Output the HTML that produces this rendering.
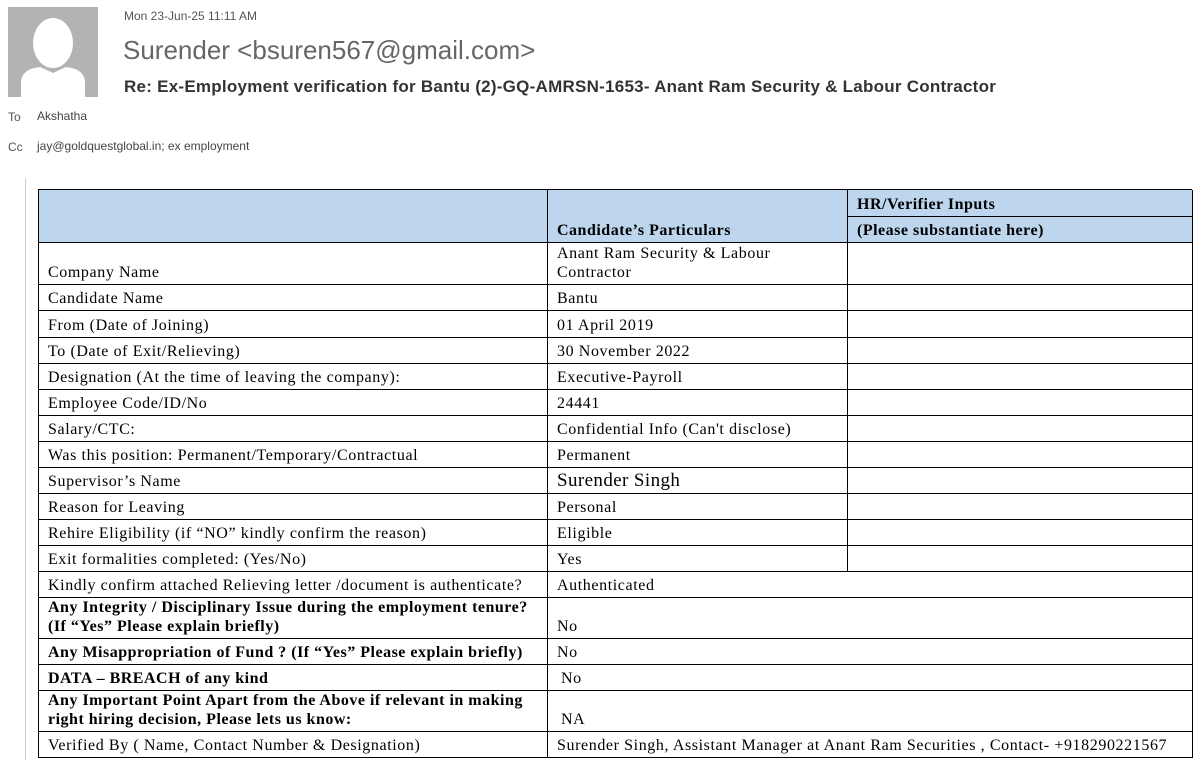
<!DOCTYPE html>
<html><head><meta charset="utf-8"><style>
body{margin:0;width:1202px;height:760px;background:#fff;position:relative;overflow:hidden;font-family:"Liberation Sans",sans-serif}
.a{position:absolute;white-space:nowrap}
.c{position:absolute;box-sizing:border-box;border-right:1px solid #000;border-bottom:1px solid #000;font-family:"Liberation Serif",serif;font-size:16px;letter-spacing:0.6px;color:#000;display:flex;align-items:flex-end;padding:0 9px 2px;line-height:19px;white-space:nowrap}
.h{background:#bdd6ee;font-weight:bold;letter-spacing:0.5px}
.b{font-weight:bold;letter-spacing:0.5px}
</style></head><body>
<div class="a" style="left:8px;top:7px;width:90px;height:90px;background:#b3b3b3;overflow:hidden">
<svg width="90" height="90" viewBox="0 0 90 90"><ellipse cx="45" cy="36" rx="20" ry="25" fill="#fff"/><path d="M13 90 L13 76 Q13 62 32 60 L45 66 L58 60 Q77 62 77 76 L77 90Z" fill="#fff"/></svg></div>
<div class="a" style="left:124px;top:9px;font-size:12px;color:#555">Mon 23-Jun-25 11:11 AM</div>
<div class="a" style="left:123px;top:35px;font-size:26px;color:#666">Surender &lt;bsuren567@gmail.com&gt;</div>
<div class="a" style="left:124px;top:77px;font-size:17px;font-weight:bold;color:#333;letter-spacing:0.25px">Re: Ex-Employment verification for Bantu (2)-GQ-AMRSN-1653- Anant Ram Security &amp; Labour Contractor</div>
<div class="a" style="left:8px;top:110px;font-size:12px;color:#555">To</div>
<div class="a" style="left:37px;top:109px;font-size:12px;color:#444">Akshatha</div>
<div class="a" style="left:8px;top:140px;font-size:12px;color:#555">Cc</div>
<div class="a" style="left:37px;top:139px;font-size:12px;color:#444">jay@goldquestglobal.in; ex employment</div>
<div class="a" style="left:25px;top:178px;width:1px;height:582px;background:#ccc"></div>
<div class="a" style="left:38px;top:189px;width:1154px;height:1px;background:#000"></div>
<div class="a" style="left:38px;top:189px;width:1px;height:569px;background:#000"></div>
<div class="c h" style="left:39px;top:190px;width:509px;height:53px"></div>
<div class="c h" style="left:548px;top:190px;width:300px;height:53px">Candidate’s Particulars</div>
<div class="c h" style="left:848px;top:190px;width:345px;height:27px">HR/Verifier Inputs</div>
<div class="c h" style="left:848px;top:217px;width:345px;height:26px">(Please substantiate here)</div>

<div class="c" style="left:39px;top:243px;width:509px;height:42px">Company Name</div>
<div class="c" style="left:548px;top:243px;width:300px;height:42px;line-height:19px">Anant Ram Security &amp; Labour<br>Contractor</div>
<div class="c" style="left:848px;top:243px;width:345px;height:42px"></div>

<div class="c" style="left:39px;top:285px;width:509px;height:26px">Candidate Name</div><div class="c" style="left:548px;top:285px;width:300px;height:26px">Bantu</div><div class="c" style="left:848px;top:285px;width:345px;height:26px"></div>
<div class="c" style="left:39px;top:311px;width:509px;height:27px">From (Date of Joining)</div><div class="c" style="left:548px;top:311px;width:300px;height:27px">01 April 2019</div><div class="c" style="left:848px;top:311px;width:345px;height:27px"></div>
<div class="c" style="left:39px;top:338px;width:509px;height:26px">To (Date of Exit/Relieving)</div><div class="c" style="left:548px;top:338px;width:300px;height:26px">30 November 2022</div><div class="c" style="left:848px;top:338px;width:345px;height:26px"></div>
<div class="c" style="left:39px;top:364px;width:509px;height:26px">Designation (At the time of leaving the company):</div><div class="c" style="left:548px;top:364px;width:300px;height:26px">Executive-Payroll</div><div class="c" style="left:848px;top:364px;width:345px;height:26px"></div>
<div class="c" style="left:39px;top:390px;width:509px;height:26px">Employee Code/ID/No</div><div class="c" style="left:548px;top:390px;width:300px;height:26px">24441</div><div class="c" style="left:848px;top:390px;width:345px;height:26px"></div>
<div class="c" style="left:39px;top:416px;width:509px;height:26px">Salary/CTC:</div><div class="c" style="left:548px;top:416px;width:300px;height:26px">Confidential Info (Can't disclose)</div><div class="c" style="left:848px;top:416px;width:345px;height:26px"></div>
<div class="c" style="left:39px;top:442px;width:509px;height:26px">Was this position: Permanent/Temporary/Contractual</div><div class="c" style="left:548px;top:442px;width:300px;height:26px">Permanent</div><div class="c" style="left:848px;top:442px;width:345px;height:26px"></div>
<div class="c" style="left:39px;top:468px;width:509px;height:26px">Supervisor’s Name</div><div class="c" style="left:548px;top:468px;width:300px;height:26px;font-size:19px;line-height:21px;letter-spacing:0.4px">Surender Singh</div><div class="c" style="left:848px;top:468px;width:345px;height:26px"></div>
<div class="c" style="left:39px;top:494px;width:509px;height:26px">Reason for Leaving</div><div class="c" style="left:548px;top:494px;width:300px;height:26px">Personal</div><div class="c" style="left:848px;top:494px;width:345px;height:26px"></div>
<div class="c" style="left:39px;top:520px;width:509px;height:26px">Rehire Eligibility (if “NO” kindly confirm the reason)</div><div class="c" style="left:548px;top:520px;width:300px;height:26px">Eligible</div><div class="c" style="left:848px;top:520px;width:345px;height:26px"></div>
<div class="c" style="left:39px;top:546px;width:509px;height:26px">Exit formalities completed: (Yes/No)</div><div class="c" style="left:548px;top:546px;width:300px;height:26px">Yes</div><div class="c" style="left:848px;top:546px;width:345px;height:26px"></div>
<div class="c" style="left:39px;top:572px;width:509px;height:26px">Kindly confirm attached Relieving letter /document is authenticate?</div><div class="c" style="left:548px;top:572px;width:645px;height:26px">Authenticated</div>
<div class="c b" style="left:39px;top:598px;width:509px;height:41px;line-height:19px">Any Integrity / Disciplinary Issue during the employment tenure?<br>(If “Yes” Please explain briefly)</div><div class="c" style="left:548px;top:598px;width:645px;height:41px">No</div>
<div class="c b" style="left:39px;top:639px;width:509px;height:26px">Any Misappropriation of Fund ? (If “Yes” Please explain briefly)</div><div class="c" style="left:548px;top:639px;width:645px;height:26px">No</div>
<div class="c b" style="left:39px;top:665px;width:509px;height:26px">DATA – BREACH of any kind</div><div class="c" style="left:548px;top:665px;width:645px;height:26px;padding-left:13px">No</div>
<div class="c b" style="left:39px;top:691px;width:509px;height:41px;line-height:19px">Any Important Point Apart from the Above if relevant in making<br>right hiring decision, Please lets us know:</div><div class="c" style="left:548px;top:691px;width:645px;height:41px;padding-left:13px">NA</div>
<div class="c" style="left:39px;top:732px;width:509px;height:26px">Verified By ( Name, Contact Number &amp; Designation)</div><div class="c" style="left:548px;top:732px;width:645px;height:26px">Surender Singh, Assistant Manager at Anant Ram Securities , Contact- +918290221567</div>
</body></html>
